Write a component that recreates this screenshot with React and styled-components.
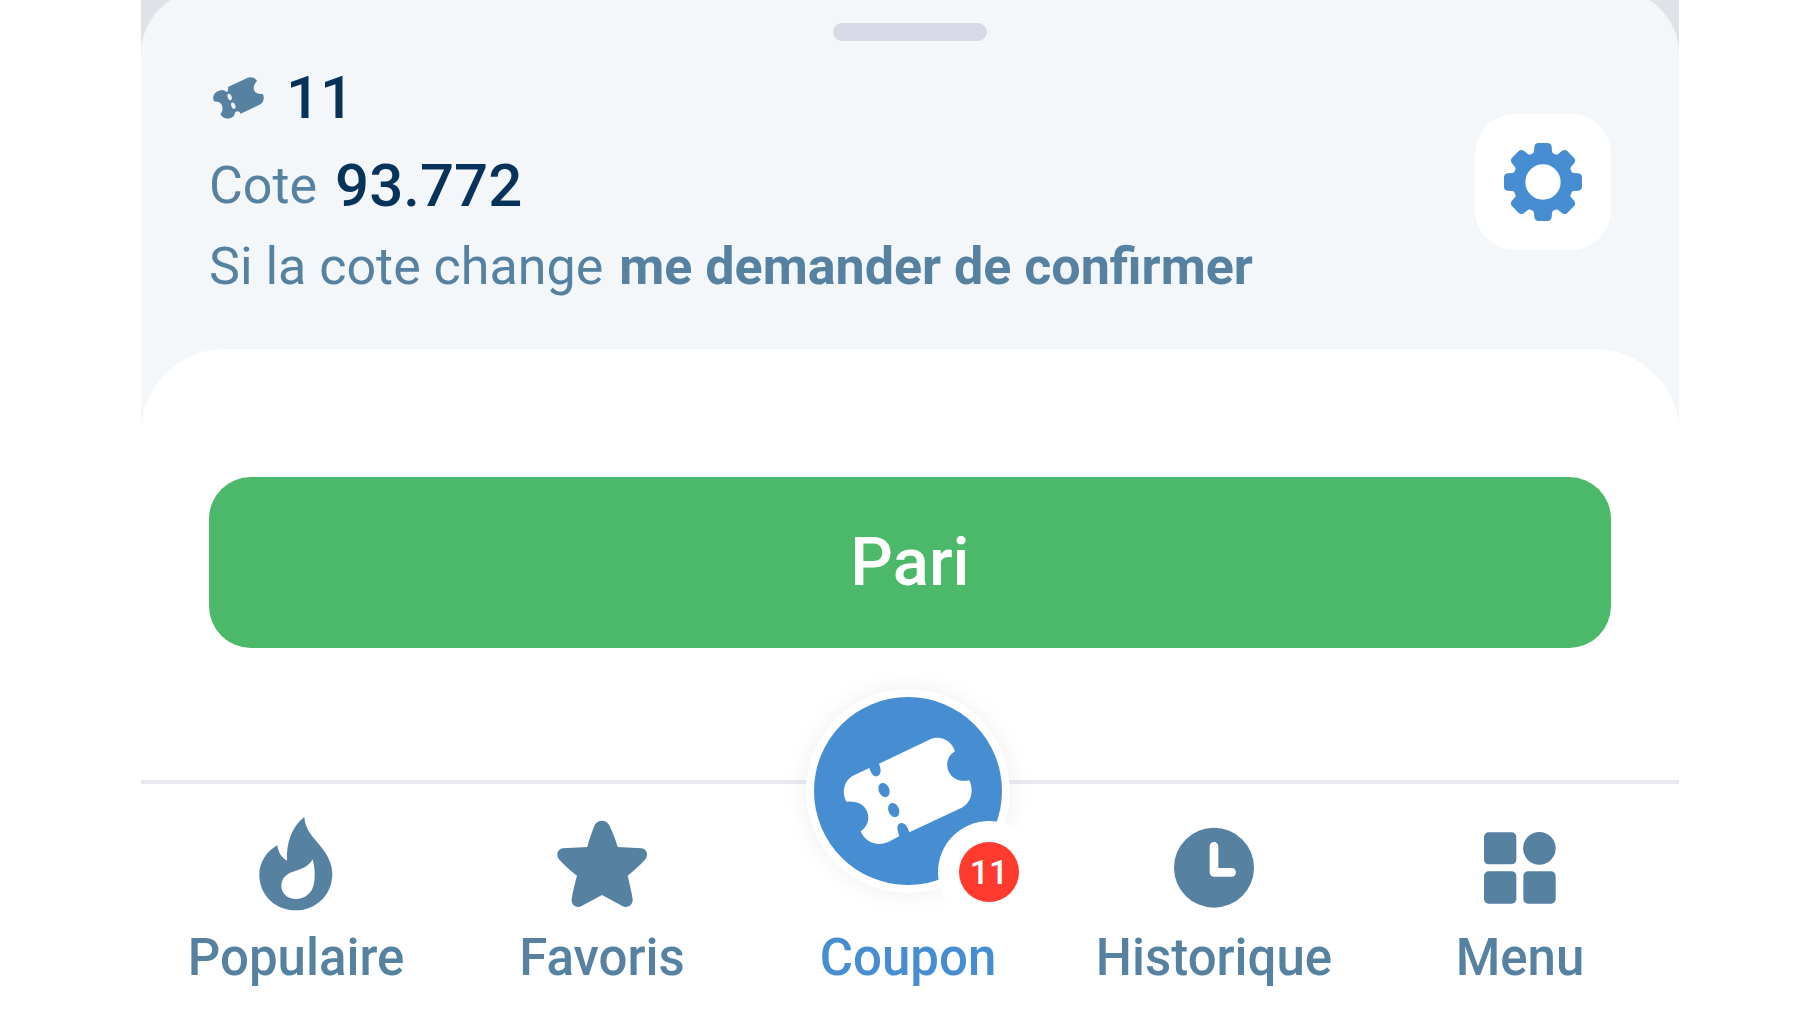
import React from "react";
import styled, { createGlobalStyle } from "styled-components";

const color = {
  slate: "#5681a1",
  navy: "#07325a",
  blue: "#478dd2",
  green: "#4cb86a",
  red: "#ff3b30",
  panel: "#f3f7fa",
  handle: "#d8dbe7",
  line: "#e9e9f2",
  backdrop: "#dfe3e8",
};

const GlobalStyle = createGlobalStyle`
  *, *::before, *::after { box-sizing: border-box; }
  body {
    margin: 0;
    background: #fff;
    font-family: Roboto, "Liberation Sans", sans-serif;
    color: ${color.slate};
  }
`;

const Page = styled.div`
  padding: 0 141px;
  overflow: hidden;
`;

const Backdrop = styled.div`
  background: ${color.backdrop};
`;

const Sheet = styled.main`
  margin-top: -10px;
  padding-top: 33px;
  border-radius: 64px 64px 0 0;
  background: ${color.panel};
`;

const Handle = styled.div`
  width: 154px;
  height: 18px;
  margin: 0 auto;
  border-radius: 9px;
  background: ${color.handle};
`;

const Header = styled.header`
  display: flex;
  align-items: center;
  justify-content: space-between;
  padding: 20px 68px 46px;
`;

const Summary = styled.div`
  display: flex;
  flex-direction: column;
  gap: 14px;
  padding-bottom: 6px;
`;

const Row = styled.div`
  display: flex;
  align-items: center;
  gap: ${(p) => p.$gap}px;
`;

const Label = styled.span`
  font-size: 52px;
  line-height: 60px;
  font-weight: ${(p) => (p.$strong ? 700 : 400)};
`;

const Value = styled.span`
  font-size: 60px;
  line-height: 74px;
  font-weight: 500;
  color: ${color.navy};
`;

const SettingsButton = styled.button`
  display: grid;
  place-items: center;
  width: 136px;
  height: 136px;
  padding: 0;
  border: 0;
  border-radius: 40px;
  background: #fff;
  cursor: pointer;
`;

const Body = styled.section`
  padding: 128px 68px 132px;
  border-radius: 84px 84px 0 0;
  background: #fff;
`;

const BetButton = styled.button`
  display: block;
  width: 100%;
  padding: 46px;
  border: 0;
  border-radius: 42px;
  background: ${color.green};
  color: #fff;
  font-family: inherit;
  font-size: 67px;
  line-height: 79px;
  font-weight: 500;
  cursor: pointer;
`;

const TabBar = styled.nav`
  display: grid;
  grid-template-columns: repeat(5, 1fr);
  padding: 32px 6px 36px 2px;
  border-top: 4px solid ${color.line};
  background: #fff;
`;

const Tab = styled.a`
  display: flex;
  flex-direction: column;
  align-items: center;
  gap: 16px;
  color: ${(p) => (p.$active ? color.blue : color.slate)};
  font-size: 51px;
  line-height: 60px;
  font-weight: 500;
  text-decoration: none;
`;

const IconSlot = styled.span`
  position: relative;
  display: flex;
  justify-content: center;
  width: 96px;
  height: 96px;
`;

const Disc = styled.span`
  position: absolute;
  bottom: 19px;
  display: block;
  width: 204px;
  height: 204px;
  border: 8px solid #fff;
  border-radius: 50%;
  background: #fff;
  box-shadow: 0 0 24px rgba(0, 0, 0, 0.07);
`;

const Badge = styled.span`
  position: absolute;
  right: -17px;
  bottom: -17px;
  width: 60px;
  height: 60px;
  border-radius: 50%;
  background: ${color.red};
  box-shadow: 0 0 0 21px #fff;
  color: #fff;
  font-size: 34px;
  line-height: 60px;
  text-align: center;
`;

const Icon = styled.svg`
  display: block;
  width: ${(p) => p.$w}px;
  height: ${(p) => p.$h || p.$w}px;
  fill: currentColor;
`;

function SmallTicket() {
  return (
    <Icon $w={57} $h={44} viewBox="237 222 171 132" aria-hidden="true">
      <path d="M294 255 L350 229 C362 222 375 226 381 237 C370 248 368 262 376 270 C382 276 392 276 399 277 C404 290 400 302 389 308 L332 335 C328 328 322 326 316 330 L312 341 C300 353 280 354 271 336 C280 328 280 310 270 302 C264 299 258 300 252 298 C246 285 252 270 268 266 C276 262 282 264 290 270 C296 268 294 260 294 255Z" />
      <g fill={color.panel}>
        <ellipse cx="299" cy="285" rx="6" ry="10" transform="rotate(-20 299 285)" />
        <ellipse cx="310" cy="311" rx="6" ry="10" transform="rotate(-20 310 311)" />
      </g>
    </Icon>
  );
}

function Gear() {
  return (
    <Icon $w={84} viewBox="-126 -126 252 252" aria-hidden="true" color={color.blue}>
      <circle r="72" fill="none" stroke="currentColor" strokeWidth="38" />
      {[0, 45, 90, 135, 180, 225, 270, 315].map((a) => (
        <path
          key={a}
          transform={`rotate(${a})`}
          d="M-34 -82 Q-27 -86 -27 -94 L-26 -106 Q-24 -117 -14 -117 H14 Q24 -117 26 -106 L27 -94 Q27 -86 34 -82Z"
        />
      ))}
    </Icon>
  );
}

function Flame() {
  return (
    <Icon $w={96} viewBox="206 78 288 288" aria-hidden="true">
      <path
        fillRule="evenodd"
        d="M375 81 C377 118 400 140 425 170 C447 197 459 225 459 252 C459 315 410 361 350 361 C288 361 240 315 240 254 C240 217 262 183 294 166 C297 186 305 202 323 212 C320 160 338 108 375 81Z M400 208 C390 226 372 236 350 242 C325 248 306 262 306 287 C306 310 325 327 350 327 C378 327 400 308 404 280 C407 262 408 240 400 208Z"
      />
    </Icon>
  );
}

function Star() {
  return (
    <Icon $w={96} viewBox="162 78 288 288" aria-hidden="true">
      <path d="M306 92 C316 92 324 98 328 106 C338 128 347 150 353 171 L425 175 C441 177 446 196 436 208 C420 226 402 242 383 257 C388 280 395 305 398 328 C399 346 382 356 367 348 L306 315 L245 348 C230 356 213 346 215 328 C218 305 225 280 231 257 C212 243 193 227 177 208 C167 196 172 177 188 175 L262 171 C267 150 275 128 284 106 C288 98 296 92 306 92Z" />
    </Icon>
  );
}

function CouponDisc() {
  return (
    <Icon $w={188} viewBox="102 110 564 564" aria-hidden="true">
      <circle cx="384" cy="392" r="282" fill={color.blue} />
      <path
        fill="#fff"
        d="M297 310 L448 238 C480 222 515 240 525 273 C500 288 495 318 510 340 C520 358 545 365 568 360 C582 390 575 425 545 442 L388 516 C384 500 375 487 363 488 C352 490 348 502 358 527 L325 545 C290 560 255 545 242 513 C262 500 270 478 262 455 C252 430 225 420 200 425 C184 400 190 360 222 345 L268 323 C275 345 285 350 292 348 C303 342 305 330 297 310Z"
      />
      <g fill={color.blue}>
        <ellipse cx="312" cy="389" rx="16" ry="22" transform="rotate(-22 312 389)" />
        <ellipse cx="341" cy="449" rx="16" ry="22" transform="rotate(-22 341 449)" />
      </g>
    </Icon>
  );
}

function Clock() {
  return (
    <Icon $w={96} viewBox="256 78 288 288" aria-hidden="true">
      <circle cx="400" cy="233" r="120" />
      <path
        d="M400 169 V247 H453"
        fill="none"
        stroke="#fff"
        strokeWidth="26"
        strokeLinecap="round"
        strokeLinejoin="round"
      />
    </Icon>
  );
}

function MenuGrid() {
  return (
    <Icon $w={96} viewBox="124 78 288 288" aria-hidden="true">
      <rect x="160" y="127" width="97" height="96" rx="14" />
      <circle cx="326" cy="175" r="49" />
      <rect x="160" y="244" width="97" height="97" rx="14" />
      <rect x="278" y="244" width="97" height="97" rx="14" />
    </Icon>
  );
}

const tabs = [
  { label: "Populaire", icon: <Flame /> },
  { label: "Favoris", icon: <Star /> },
  {
    label: "Coupon",
    active: true,
    icon: (
      <Disc>
        <CouponDisc />
        <Badge>11</Badge>
      </Disc>
    ),
  },
  { label: "Historique", icon: <Clock /> },
  { label: "Menu", icon: <MenuGrid /> },
];

export default function App() {
  return (
    <Page>
      <GlobalStyle />
      <Backdrop>
        <Sheet>
          <Handle />
          <Header>
            <Summary>
              <Row $gap={20}>
                <SmallTicket />
                <Value>11</Value>
              </Row>
              <Row $gap={18}>
                <Label>Cote</Label>
                <Value>93.772</Value>
              </Row>
              <Row $gap={16}>
                <Label>Si la cote change</Label>
                <Label as="strong" $strong>
                  me demander de confirmer
                </Label>
              </Row>
            </Summary>
            <SettingsButton type="button" aria-label="Paramètres">
              <Gear />
            </SettingsButton>
          </Header>
          <Body>
            <BetButton type="button">Pari</BetButton>
          </Body>
        </Sheet>
      </Backdrop>
      <TabBar>
        {tabs.map((t) => (
          <Tab
            key={t.label}
            href={`#${t.label.toLowerCase()}`}
            $active={t.active}
            aria-current={t.active ? "page" : undefined}
          >
            <IconSlot>{t.icon}</IconSlot>
            {t.label}
          </Tab>
        ))}
      </TabBar>
    </Page>
  );
}
